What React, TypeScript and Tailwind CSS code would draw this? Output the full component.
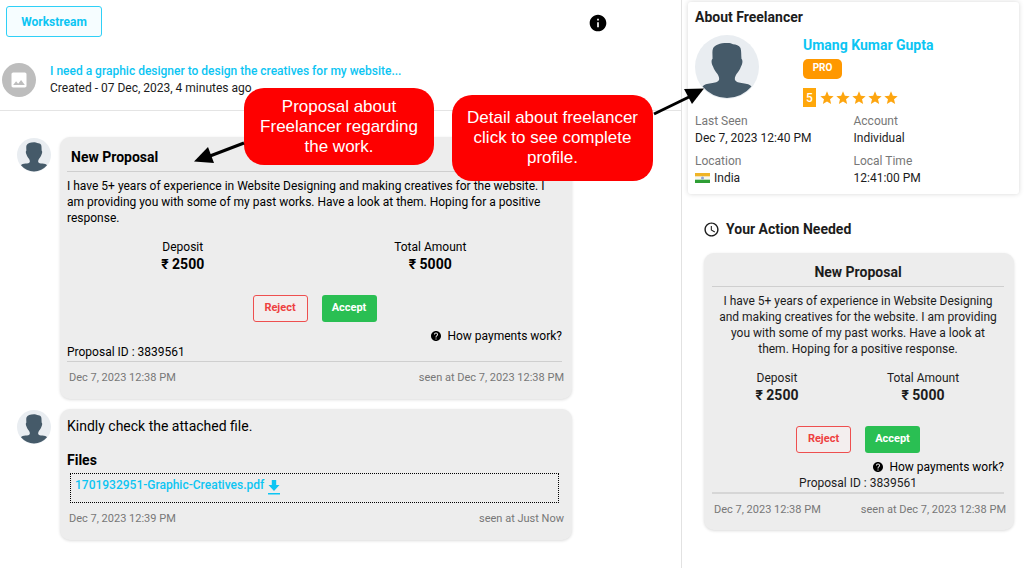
import type { ReactNode } from "react";
import { MdImage, MdInfo, MdHelp, MdStar, MdAccessTime } from "react-icons/md";

function Avatar({ className }: { className: string }) {
  return (
    <svg viewBox="0 0 64 64" className={className} role="img" aria-label="Freelancer avatar">
      <circle cx="32" cy="32" r="32" fill="#e9edf1" />
      <path
        d="M32 8c2-.2 4.500.3 6 1.300 3 .2 6 1 7.500 3.700 1 3 .6 7 1 11 1.400.6 1.200 5-.5 7.500C45 35 43 37 41.500 39c-1.200 2-2 4-1.500 6 .8 2 4 2.800 8 3.200 4 .5 7 1.300 8.500 3.300a32 32 0 0 1-49 0c1.500-2 4.500-2.800 8.500-3.300 4-.4 7.200-1.200 8-3.200.5-2-.3-4-1.500-6-1.500-2-3.500-4-4.500-7.500-1.700-2.500-1.900-6.900-.5-7.500.2-4-.6-7.500.5-10.500C19.500 10 25 8 32 8z"
        fill="#455a69"
      />
    </svg>
  );
}

function Callout({ className, children }: { className: string; children: ReactNode }) {
  return (
    <div
      className={`absolute flex items-center justify-center rounded-[20px] bg-[#fe0000] text-center font-['Liberation_Sans',Arial,sans-serif] text-[17px] leading-5 text-white ${className}`}
    >
      {children}
    </div>
  );
}

function ProposalActions() {
  return (
    <div className="mt-[22px] flex justify-center gap-[14px]">
      <button className="h-[27px] w-[55px] rounded-[3px] border border-[#ee4f4f] bg-[#f3eeee] text-[11px] font-bold text-[#ee4040]">
        Reject
      </button>
      <button className="h-[27px] w-[55px] rounded-[3px] bg-[#2abf53] text-[11px] font-bold text-white">Accept</button>
    </div>
  );
}

function Amounts() {
  return (
    <dl className="mt-3 mr-2 -ml-2 grid grid-cols-2 text-center">
      <div>
        <dt className="text-xs leading-[18px]">Deposit</dt>
        <dd className="text-sm leading-[17px] font-bold">₹ 2500</dd>
      </div>
      <div>
        <dt className="text-xs leading-[18px]">Total Amount</dt>
        <dd className="text-sm leading-[17px] font-bold">₹ 5000</dd>
      </div>
    </dl>
  );
}

function PaymentsLink() {
  return (
    <div className="mt-[6px] flex justify-end">
      <a href="#payments" className="flex items-center gap-[5px] text-xs leading-4 text-black">
        <MdHelp className="size-3" />
        How payments work?
      </a>
    </div>
  );
}

function Stamps({ sent, seen }: { sent: string; seen: string }) {
  return (
    <div className="-mr-0.5 flex justify-between pl-0.5 text-[11px] leading-4 text-[#777]">
      <time>{sent}</time>
      <span>{seen}</span>
    </div>
  );
}

const proposal =
  "I have 5+ years of experience in Website Designing and making creatives for the website. I am providing you with some of my past works. Have a look at them. Hoping for a positive response.";

function Field({ label, children }: { label: string; children: ReactNode }) {
  return (
    <div>
      <dt className="text-xs leading-4 text-[#777]">{label}</dt>
      <dd className="mt-px flex items-center gap-1 text-xs leading-4">{children}</dd>
    </div>
  );
}

function Flag() {
  return (
    <svg viewBox="0 0 15 10" className="h-[10px] w-[15px]" role="img" aria-label="Flag of India">
      <rect width="15" height="10" fill="#f6f6f2" />
      <rect width="15" height="3.300" fill="#efb428" />
      <rect y="6.700" width="15" height="3.300" fill="#2f9e35" />
      <circle cx="7.500" cy="5" r="1.500" fill="#8fa3d4" />
    </svg>
  );
}

export default function App() {
  return (
    <div className="relative flex min-h-screen overflow-hidden bg-white font-[Roboto,sans-serif] text-xs text-[#1c1c1c]">
      <main className="relative min-w-0 flex-1">
        <div className="flex items-start justify-between pt-[6px] pr-[73px] pl-[6px]">
          <button className="h-[31px] w-24 rounded-[3px] border border-[#2fd0f7] bg-[#f6fdff] text-xs font-bold text-[#0cc5f3]">
            Workstream
          </button>
          <button aria-label="Information" className="mt-[7px] text-black">
            <MdInfo className="size-5" />
          </button>
        </div>

        <header className="mt-[26px] flex h-[48px] items-start gap-[14px] border-b border-[#e4e4e4] pl-0.5">
          <span className="flex size-[34px] items-center justify-center rounded-full bg-[#bdbdbd] text-white">
            <MdImage className="size-5" />
          </span>
          <div>
            <a href="#project" className="block text-xs leading-[17px] font-medium text-[#0cc5f3]">
              I need a graphic designer to design the creatives for my website...
            </a>
            <p className="text-xs leading-[17px]">Created - 07 Dec, 2023, 4 minutes ago</p>
          </div>
        </header>

        <section className="flex flex-col gap-[10px] pt-[26px] pr-[109px] pb-7 pl-[17px]">
          <article className="flex items-start gap-[9px]">
            <Avatar className="mt-px size-[34px] shrink-0" />
            <div className="min-w-0 flex-1 rounded-[10px] bg-[#ededed] pt-[11px] pr-[10px] pb-[13px] pl-[7px] text-black shadow-[0_1px_3px_rgba(0,0,0,0.14)]">
              <h2 className="border-b border-[#cfcfcf] pb-[5px] pl-1 text-sm leading-[18px] font-bold">New Proposal</h2>
              <p className="mt-[6px] text-xs leading-4">{proposal}</p>
              <Amounts />
              <ProposalActions />
              <PaymentsLink />
              <p className="mb-2 border-b border-[#cfcfcf] pb-px text-xs leading-4">Proposal ID : 3839561</p>
              <Stamps sent="Dec 7, 2023 12:38 PM" seen="seen at Dec 7, 2023 12:38 PM" />
            </div>
          </article>

          <article className="flex items-start gap-[9px]">
            <Avatar className="mt-px size-[34px] shrink-0" />
            <div className="min-w-0 flex-1 rounded-[10px] bg-[#ededed] pt-2 pr-[10px] pb-[13px] pl-[7px] text-black shadow-[0_1px_3px_rgba(0,0,0,0.14)]">
              <p className="text-sm leading-[18px]">Kindly check the attached file.</p>
              <h3 className="mt-4 text-sm leading-[18px] font-bold">Files</h3>
              <div className="mx-[3px] mt-1 mb-2 h-[30px] border border-dotted border-black px-1">
                <a href="#file" className="flex items-start gap-1 pt-[3px] text-xs leading-4 font-medium text-[#0cc5f3]">
                  1701932951-Graphic-Creatives.pdf
                  <svg viewBox="0 0 12 15" className="mt-[3px] h-[15px] w-3" fill="currentColor" aria-hidden="true">
                    <path d="M3.800 0h4.400v5h3.300L6 11 .5 5h3.300zM0 13h12v1.600H0z" />
                  </svg>
                </a>
              </div>
              <Stamps sent="Dec 7, 2023 12:39 PM" seen="seen at Just Now" />
            </div>
          </article>
        </section>

        <Callout className="top-[88px] left-[244px] h-[77px] w-[190px]">
          Proposal about
          <br />
          Freelancer regarding
          <br />
          the work.
        </Callout>
        <svg viewBox="0 0 52 26" className="absolute top-[140px] left-[193px] h-[26px] w-[52px]" aria-hidden="true">
          <path d="M51 3L17 16" stroke="#000" strokeWidth="3" />
          <path d="M1 21.500L15 7l6 16z" />
        </svg>
      </main>

      <aside className="relative w-[343px] shrink-0 border-l border-[#e2e2e2] pt-0.5 pr-[5px] pl-[6px]">
        <section className="rounded-[3px] px-[7px] pt-[6px] pb-2 shadow-[0_0_5px_rgba(0,0,0,0.16)]">
          <h2 className="text-sm leading-[18px] font-bold">About Freelancer</h2>
          <div className="mt-[9px] flex items-start gap-11">
            <Avatar className="size-16" />
            <div>
              <a href="#freelancer" className="block text-sm leading-5 font-bold text-[#0cc5f3]">
                Umang Kumar Gupta
              </a>
              <span className="mt-1 flex h-5 w-[39px] justify-center rounded-[5px] bg-[#ff9800] text-[10px] leading-[18px] font-bold text-white">
                PRO
              </span>
              <div className="mt-[9px] flex items-center" role="img" aria-label="Rated 5 of 5">
                <span className="mr-[3px] h-[19px] w-[13px] bg-[#ffa70a] text-center text-xs leading-5 font-medium text-white">5</span>
                {[1, 2, 3, 4, 5].map((n) => (
                  <MdStar key={n} className="size-4 text-[#fda50f]" />
                ))}
              </div>
            </div>
          </div>
          <dl className="mt-[6px] grid grid-cols-2 gap-y-[7px]">
            <Field label="Last Seen">Dec 7, 2023 12:40 PM</Field>
            <Field label="Account">Individual</Field>
            <Field label="Location">
              <Flag />
              India
            </Field>
            <Field label="Local Time">12:41:00 PM</Field>
          </dl>
        </section>

        <h2 className="mt-[26px] flex items-center gap-[6px] pl-[15px] text-sm leading-[18px] font-bold">
          <MdAccessTime className="size-[17px]" />
          Your Action Needed
        </h2>
        <section className="mt-[15px] mr-[5px] ml-4 rounded-[10px] bg-[#ededed] pt-[10px] pr-[10px] pb-3 pl-2 text-center shadow-[0_1px_3px_rgba(0,0,0,0.14)]">
          <h3 className="border-b border-[#cfcfcf] pb-[5px] text-sm leading-[18px] font-bold">New Proposal</h3>
          <p className="mt-[6px] px-1 text-xs leading-4">{proposal}</p>
          <Amounts />
          <ProposalActions />
          <PaymentsLink />
          <p className="mb-2 border-b-2 border-[#d6d6d6] pb-px text-xs leading-4">Proposal ID : 3839561</p>
          <Stamps sent="Dec 7, 2023 12:38 PM" seen="seen at Dec 7, 2023 12:38 PM" />
        </section>

        <Callout className="top-[95px] right-[371px] h-[86px] w-[201px]">
          Detail about freelancer
          <br />
          click to see complete
          <br />
          profile.
        </Callout>
        <svg viewBox="0 0 52 30" className="absolute top-[87px] -left-[29px] h-[30px] w-[52px]" aria-hidden="true">
          <path d="M1 27L36 10" stroke="#000" strokeWidth="3" />
          <path d="M51 1.500L31 2l8 15z" />
        </svg>
      </aside>
    </div>
  );
}
